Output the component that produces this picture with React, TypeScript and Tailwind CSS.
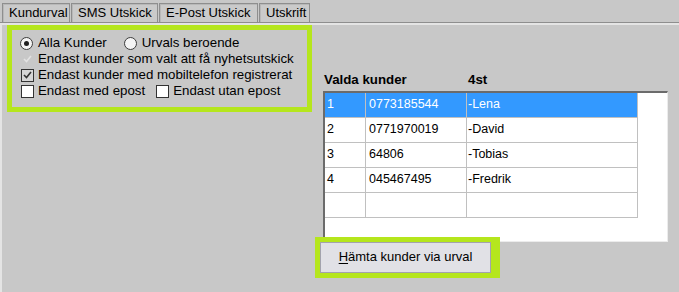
import React from "react";

const tabs = [
  { label: "Kundurval", w: "w-[68px]" },
  { label: "SMS Utskick", w: "w-[87px]" },
  { label: "E-Post Utskick", w: "w-[99px]" },
  { label: "Utskrift", w: "w-[51px]" },
];

const rows = [
  { nr: "1", phone: "0773185544", name: "-Lena", selected: true },
  { nr: "2", phone: "0771970019", name: "-David" },
  { nr: "3", phone: "64806", name: "-Tobias" },
  { nr: "4", phone: "045467495", name: "-Fredrik" },
  { nr: "", phone: "", name: "" },
];

function Radio({ checked }: { checked?: boolean }) {
  return (
    <span className="flex h-[13px] w-[13px] shrink-0 items-center justify-center rounded-full border border-[#3c3c3c] bg-[#f4f4f4]">
      {checked && <span className="h-[5px] w-[5px] rounded-full bg-[#1e1e1e]" />}
    </span>
  );
}

function Check({ checked, disabled, white }: { checked?: boolean; disabled?: boolean; white?: boolean }) {
  return (
    <span
      className={`ml-[1px] flex h-[13px] w-[13px] shrink-0 items-center justify-center border ${
        disabled ? "border-transparent" : "border-[#333333]"
      } ${white ? "bg-white" : disabled ? "bg-transparent" : "bg-[#d6d6d6]"}`}
    >
      {checked && (
        <svg width="9" height="8" viewBox="0 0 9 8">
          <path
            d="M1 4 L3.5 6.5 L8 1"
            fill="none"
            stroke={disabled ? "#e2e2e2" : "#333333"}
            strokeWidth="1.6"
          />
        </svg>
      )}
    </span>
  );
}

export default function App() {
  return (
    <div className="h-[292px] w-[679px] overflow-hidden bg-[#c8c8c8] font-['Liberation_Sans',Arial,sans-serif] text-[13.3px] text-black">
      {/* TABS */}
      <div className="flex h-[22px] items-end gap-[1px] pl-[2px]">
        {tabs.map((t) => (
          <div
            key={t.label}
            className={`${t.w} flex h-[19px] items-center overflow-hidden whitespace-nowrap border border-b-0 border-[#8e8e8e] bg-[#cacaca] pb-[1px] pl-[6px] text-[13px] shadow-[inset_1px_1px_0_#b8b8b8]`}
          >
            {t.label}
          </div>
        ))}
      </div>

      {/* PANEL */}
      <div className="h-[270px] border-t border-[#8e8e8e]">
        <div className="flex h-full border-l-2 border-t-2 border-[#e4e4e4]">
          {/* OPTIONS */}
          <div className="ml-[5px] h-[87px] w-[305px] border-[5px] border-[#b5e61d] pl-[8px] pt-[5px]">
            <div className="flex h-[16px] items-center">
              <Radio checked />
              <span className="ml-[5px]">Alla Kunder</span>
              <span className="ml-[17px]">
                <Radio />
              </span>
              <span className="ml-[5px]">Urvals beroende</span>
            </div>
            <div className="flex h-[16px] items-center">
              <Check checked disabled />
              <span className="ml-[4px]">Endast kunder som valt att få nyhetsutskick</span>
            </div>
            <div className="flex h-[16px] items-center">
              <Check checked />
              <span className="ml-[4px]">Endast kunder med mobiltelefon registrerat</span>
            </div>
            <div className="flex h-[16px] items-center">
              <Check white />
              <span className="ml-[4px]">Endast med epost</span>
              <span className="ml-[10px]">
                <Check white />
              </span>
              <span className="ml-[4px]">Endast utan epost</span>
            </div>
          </div>

          {/* SELECTED CUSTOMERS */}
          <div className="ml-[3px] flex flex-col">
            <div className="ml-[9px] mt-[47px] flex h-[16px] items-center font-bold">
              <span className="w-[144px]">Valda kunder</span>
              <span>4st</span>
            </div>
            <div className="ml-[8px] mt-[3px] h-[151px] w-[345px] border-b border-l-2 border-r border-t-2 border-b-[#ececec] border-l-[#6b6b6b] border-r-[#ececec] border-t-[#6b6b6b] bg-white text-[12.5px]">
              {rows.map((r, i) => (
                <div
                  key={i}
                  className={`flex h-[25px] w-[313px] border-b border-[#c0c0c0] ${
                    r.selected ? "bg-[#3399ff] text-white" : ""
                  }`}
                >
                  <div className="flex w-[41px] items-center border-r border-[#c0c0c0] pb-[2px] pl-[2px]">{r.nr}</div>
                  <div className="flex w-[101px] items-center border-r border-[#c0c0c0] pb-[2px] pl-[3px]">{r.phone}</div>
                  <div className="flex w-[171px] items-center border-r border-[#c0c0c0] pb-[2px] pl-[1px]">{r.name}</div>
                </div>
              ))}
            </div>
            <div className="relative z-10 -mt-[5px] w-[185px] bg-[#b5e61d] py-[5px] pl-[5px] pr-[9px]">
              <button className="flex h-[31px] w-[171px] items-center justify-center border border-[#a3a3ad] bg-[#e1e1e6] pb-[1px] text-[13px]">
                <span>
                  <span className="underline underline-offset-2">H</span>ämta kunder via urval
                </span>
              </button>
            </div>
          </div>
        </div>
      </div>
    </div>
  );
}
